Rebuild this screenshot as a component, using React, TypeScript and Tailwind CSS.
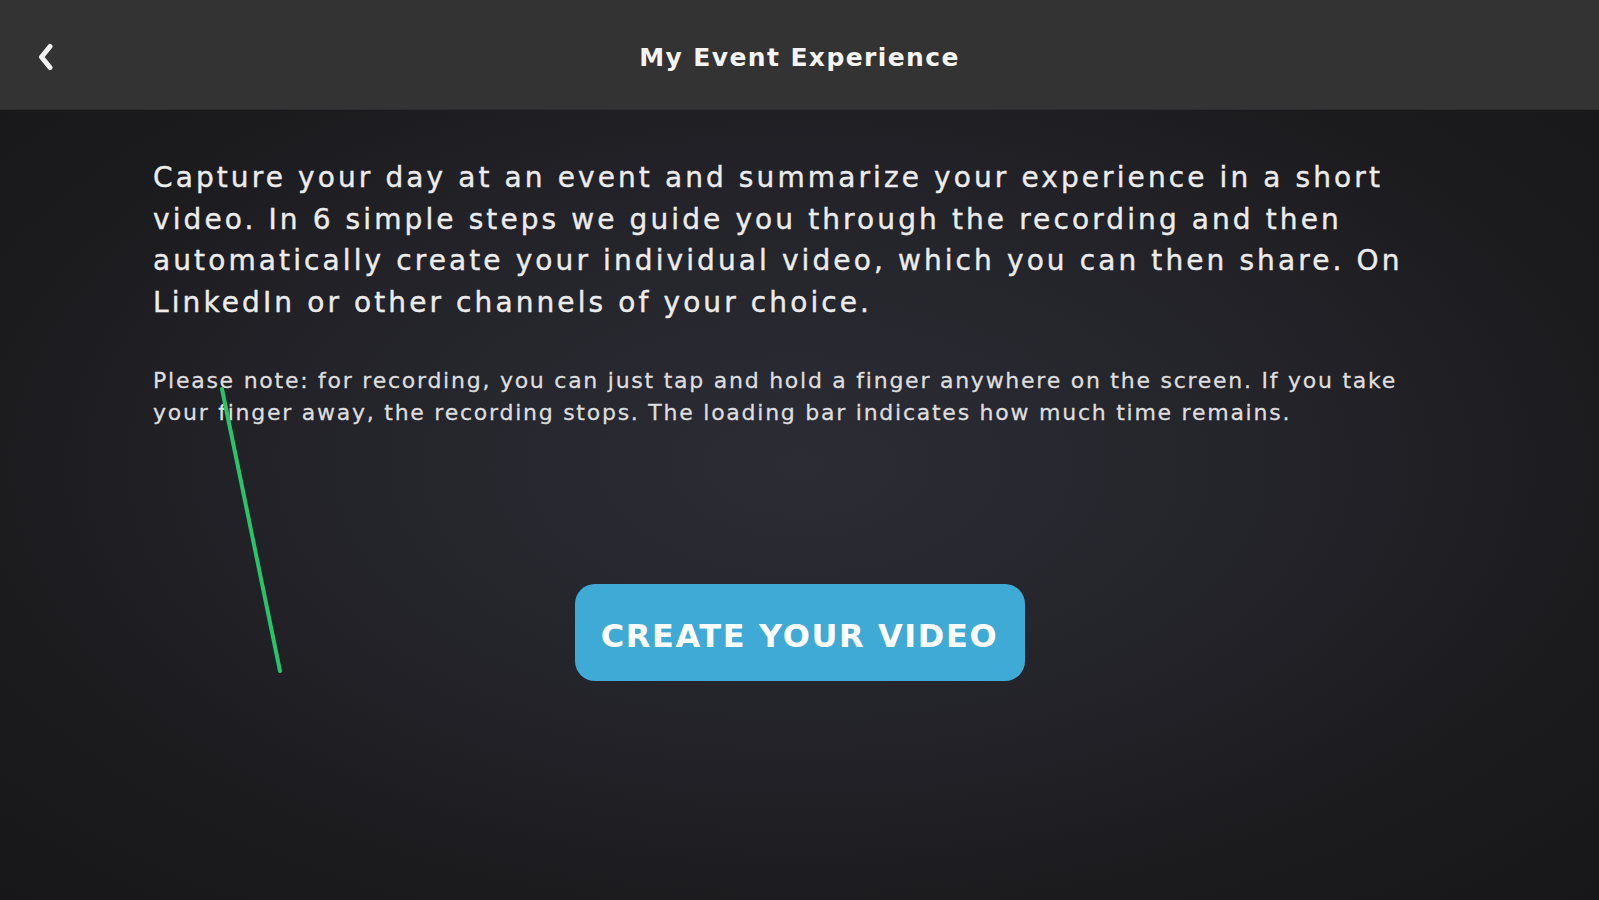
import React from "react";

const mainLines = [
  "Capture your day at an event and summarize your experience in a short",
  "video. In 6 simple steps we guide you through the recording and then",
  "automatically create your individual video, which you can then share. On",
  "LinkedIn or other channels of your choice.",
];

const noteLines = [
  "Please note: for recording, you can just tap and hold a finger anywhere on the screen. If you take",
  "your finger away, the recording stops. The loading bar indicates how much time remains.",
];

export default function App() {
  return (
    <div
      className="relative w-full min-h-[900px] flex flex-col bg-[#18181a] text-white overflow-hidden"
      style={{ fontFamily: '"DejaVu Sans", "Open Sans", sans-serif' }}
    >
      <header className="h-[110px] shrink-0 bg-[#333333] grid grid-cols-[1fr_auto_1fr] items-center border-b border-[#2c2c2c]">
        <div className="pl-[36px] pt-[4px] flex items-center">
          <button className="w-[20px] h-[30px] flex items-center justify-center">
            <svg width="18" height="28" viewBox="0 0 18 28" fill="none">
              <path d="M13 3.5 L4.5 14 L13 24.5" stroke="#f2f2f2" strokeWidth="5" strokeLinecap="round" strokeLinejoin="round" />
            </svg>
          </button>
        </div>
        <h1 className="pt-[7px] text-[25px] font-bold tracking-[1.4px] text-[#f4f4f4] whitespace-nowrap">My Event Experience</h1>
        <div />
      </header>

      <main className="flex-1 min-h-[790px] flex flex-col bg-[radial-gradient(ellipse_at_50%_45%,#2c2c35_0%,#25252c_35%,#1b1b1e_75%,#17171a_100%)]">
        <div className="pl-[153px] pt-[47px] text-[28px] leading-[41.6px] tracking-[3.1px] text-[#ececec] [-webkit-text-stroke:0.4px_#ececec]">
          {mainLines.map((l) => (
            <div key={l} className="whitespace-nowrap">{l}</div>
          ))}
        </div>
        <div className="pl-[153px] pt-[42px] text-[22px] leading-[32px] tracking-[1.75px] text-[#dedede] [-webkit-text-stroke:0.3px_#dedede]">
          {noteLines.map((l) => (
            <div key={l} className="whitespace-nowrap">{l}</div>
          ))}
        </div>
        <div className="flex justify-center pt-[155px]">
          <button className="w-[450px] h-[97px] rounded-[20px] bg-[#40aad6] flex items-center justify-center pt-[6px] text-[32px] font-bold text-white tracking-[1.6px]">
            CREATE YOUR VIDEO
          </button>
        </div>
      </main>

      <svg className="absolute left-0 top-0 pointer-events-none" width="1599" height="900">
        <line x1="222" y1="389" x2="280" y2="671" stroke="#27c46a" strokeWidth="4" strokeLinecap="round" />
      </svg>
    </div>
  );
}
